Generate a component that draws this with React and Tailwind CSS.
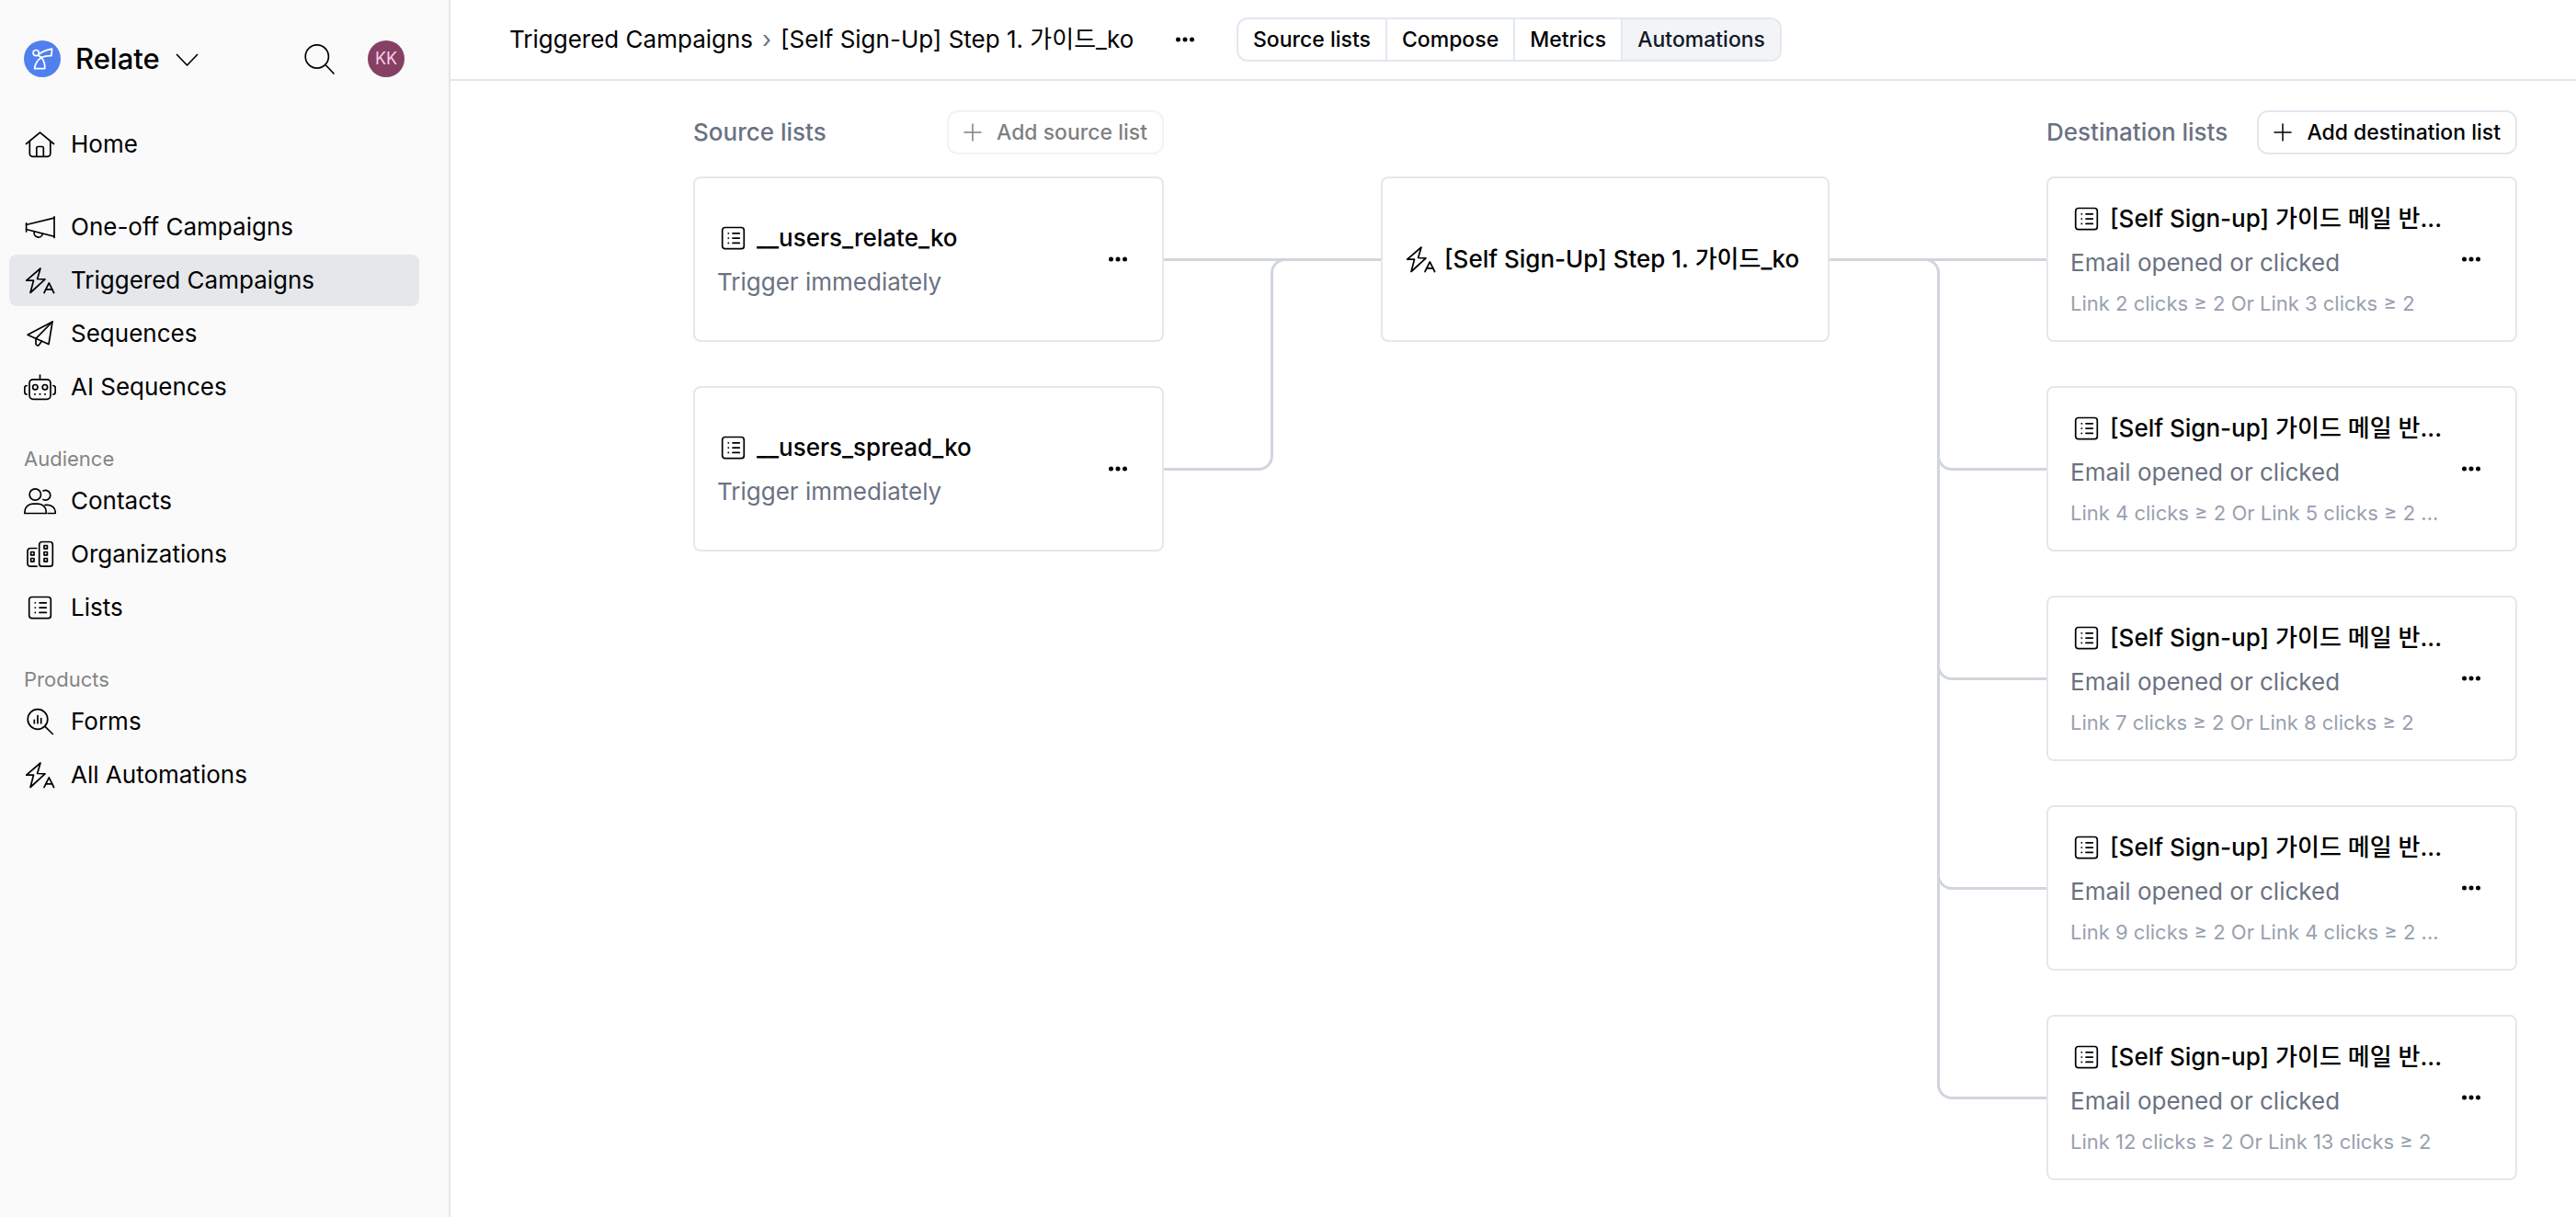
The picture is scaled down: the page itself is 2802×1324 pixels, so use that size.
const ICONS = {
  home: (
    <>
      <path d="M2.500 16.500 17.500 4.200l15 12.300" />
      <path d="M6.300 13.800V27.300a3 3 0 0 0 3 3h16.500a3 3 0 0 0 3-3V13.800" />
      <path d="M13.800 30V21a1.500 1.500 0 0 1 1.500-1.500h4.500a1.500 1.500 0 0 1 1.500 1.500V30" />
    </>
  ),
  horn: (
    <>
      <path d="M33 5.800v22.700" />
      <path d="M2.600 12.800V22" />
      <path d="M2.600 14.500 33 7.200" />
      <path d="M2.600 19.500 33 27.300" />
      <path d="M11.300 22.300a4.600 4.600 0 0 0 9 2.300" />
    </>
  ),
  trigger: (
    <>
      <path d="M18 4 2.700 17.200h7.800L7 30.500 23 15.800l-8.400-.3Z" />
      <path d="M22 30.500l5.300-10.700 5.300 10.700" />
      <path d="M23.900 26.800h6.800" />
    </>
  ),
  plane: (
    <>
      <path d="M31 4 4 18.200l23 10.300Z" />
      <path d="M31 4 13 22.300v5.500a2 2 0 0 0 3.600 1.200L19.500 25" />
    </>
  ),
  robot: (
    <>
      <path d="M17.500 4v4.800" />
      <rect x="6" y="8.800" width="23" height="21.500" rx="4" />
      <circle cx="12.300" cy="17.200" r="2.700" />
      <circle cx="22.900" cy="17.200" r="2.700" />
      <path d="M11.700 24.800h.6M17.200 24.800h.6M22.700 24.800h.6" />
      <path d="M3.200 15.500c-1.500 0-2.400 1-2.400 2.500v4.500c0 1.500.9 2.500 2.400 2.500" />
      <path d="M31.800 15.500c1.500 0 2.400 1 2.400 2.500v4.500c0 1.500-.9 2.500-2.400 2.500" />
    </>
  ),
  people: (
    <>
      <circle cx="12.300" cy="10" r="6.200" />
      <path d="M.9 30.500v-1.500c0-5 4-8.800 9-8.800h5.400c5 0 9 3.800 9 8.800v1.500Z" />
      <path d="M21 6a5.300 5.300 0 1 1 0 9.400" />
      <path d="M23 21.300h3c4.600 0 8.200 3.500 8.200 8v1.200h-8" />
    </>
  ),
  buildings: (
    <>
      <path d="M13.700 10.500H7a3 3 0 0 0-3 3v13.700a3 3 0 0 0 3 3h7" />
      <rect x="16.700" y="3.500" width="14.600" height="26.700" rx="3" />
      <path d="M7.600 14.500h3.400v3.400H7.600zM7.600 21.500h3.400v3.400H7.600zM22 7.500h3.400v3.400H22zM22 14.500h3.400v3.400H22zM22 21.500h3.400v3.400H22z" />
    </>
  ),
  list: (
    <>
      <rect x="5.700" y="5.500" width="23.600" height="23.200" rx="3" />
      <path d="M12.200 11.800h.2M12.200 17.100h.2M12.200 22.400h.2M17 11.800h7.300M17 17.100h7.300M17 22.400h7.300" />
    </>
  ),
  lens: (
    <>
      <circle cx="15" cy="14.500" r="10.800" />
      <path d="M23 22.300 31.300 30.500" />
      <path d="M11.300 15.300v3.500M15 10.500v8.300M18.700 13.500v5.300" />
    </>
  ),
  search: (
    <>
      <circle cx="14.800" cy="14.500" r="12.600" />
      <path d="M24 23.500 33 33" />
    </>
  ),
  chevron: <path d="M6.500 12.500 17.500 24 28.500 12.500" />,
};

function Icon({ name }) {
  return (
    <svg
      viewBox="0 0 35 35"
      fill="none"
      stroke="currentColor"
      strokeWidth="1.700"
      strokeLinecap="round"
      strokeLinejoin="round"
      className="size-[35px] shrink-0"
      aria-hidden="true"
    >
      {ICONS[name]}
    </svg>
  );
}

function Plus() {
  return (
    <svg viewBox="0 0 20 20" fill="none" stroke="currentColor" strokeWidth="1.500" strokeLinecap="round" className="size-5" aria-hidden="true">
      <path d="M10 1v18M1 10h18" />
    </svg>
  );
}

function Dots() {
  return (
    <button type="button" aria-label="More" className="flex size-10 shrink-0 items-center justify-center">
      <svg viewBox="0 0 22 6" className="h-1.5 w-5.5" fill="currentColor" aria-hidden="true">
        <circle cx="3.500" cy="3" r="2.500" />
        <circle cx="11" cy="3" r="2.500" />
        <circle cx="18.500" cy="3" r="2.500" />
      </svg>
    </button>
  );
}

const NAV = [
  { items: [["home", "Home"]] },
  {
    items: [
      ["horn", "One-off Campaigns"],
      ["trigger", "Triggered Campaigns", true],
      ["plane", "Sequences"],
      ["robot", "AI Sequences"],
    ],
  },
  {
    title: "Audience",
    items: [
      ["people", "Contacts"],
      ["buildings", "Organizations"],
      ["list", "Lists"],
    ],
  },
  {
    title: "Products",
    items: [
      ["lens", "Forms"],
      ["trigger", "All Automations"],
    ],
  },
];

function Sidebar() {
  return (
    <aside className="w-[490px] shrink-0 border-r-2 border-gray-200 bg-[#fafafa] pr-8 pl-2.5">
      <div className="flex h-32 items-center px-4">
        <svg viewBox="0 0 40 40" className="size-10 shrink-0" aria-hidden="true">
          <circle cx="20" cy="20" r="20" fill="#4f80ee" />
          <g fill="none" stroke="#fff" strokeWidth="1.700" strokeLinejoin="round">
            <circle cx="13.200" cy="13.600" r="3.100" />
            <path d="M16.300 15.200C20 12.300 25 10.200 30.500 9.200L30 16.700C26 16.600 22.500 17 19 18.500L15.500 16.200" />
            <path d="M19 18.500C14.500 21.500 12 26 11.600 30.700H22.800C23 26.500 22 22 19 18.500Z" />
          </g>
        </svg>
        <button type="button" className="ml-4 flex items-center gap-3 text-[31px] font-medium">
          Relate
          <Icon name="chevron" />
        </button>
        <button type="button" aria-label="Search" className="ml-auto">
          <Icon name="search" />
        </button>
        <span className="ml-[35px] flex size-10 items-center justify-center rounded-full bg-[#864064] text-lg text-pink-200">
          KK
        </span>
      </div>
      <nav className="flex flex-col gap-8.5 pt-px">
        {NAV.map((group, i) => (
          <div key={i}>
            {group.title && (
              <h2 className="pb-0.5 pl-4 text-[22px] leading-8 text-[#858585]">{group.title}</h2>
            )}
            <ul className="flex flex-col gap-0.5">
              {group.items.map(([icon, label, active]) => (
                <li key={label}>
                  <a
                    href="#"
                    aria-current={active ? "page" : undefined}
                    className={`flex h-14 items-center gap-4 rounded-lg px-4 ${active ? "bg-gray-200" : ""}`}
                  >
                    <Icon name={icon} />
                    {label}
                  </a>
                </li>
              ))}
            </ul>
          </div>
        ))}
      </nav>
    </aside>
  );
}

const TABS = ["Source lists", "Compose", "Metrics", "Automations"];

function Header() {
  return (
    <header className="flex h-22 items-center border-b-2 border-gray-200 pl-16">
      <div className="flex w-[680px] items-center gap-2.5 overflow-hidden whitespace-nowrap">
        <a href="#">Triggered Campaigns</a>
        <span className="text-gray-500">›</span>
        <span>[Self Sign-Up] Step 1. 가이드_ko</span>
      </div>
      <div className="ml-[35px]">
        <Dots />
      </div>
      <div className="ml-9 flex h-12 divide-x-2 divide-slate-200 overflow-hidden rounded-xl border-2 border-slate-200 text-[23px] font-medium">
        {TABS.map((tab) => (
          <button
            key={tab}
            type="button"
            className={`px-4 ${tab === "Automations" ? "bg-gray-100 text-gray-900" : ""}`}
          >
            {tab}
          </button>
        ))}
      </div>
    </header>
  );
}

function ColumnHead({ title, action, disabled }) {
  return (
    <div className="mb-6 flex h-12 items-center justify-between">
      <h2 className="font-medium text-gray-500">{title}</h2>
      <button
        type="button"
        disabled={disabled}
        className="flex h-12 items-center gap-4 rounded-xl border-2 border-slate-200 px-4 text-[23px] font-medium disabled:opacity-50"
      >
        <Plus />
        {action}
      </button>
    </div>
  );
}

function ListCard({ title, subtitle, detail }) {
  return (
    <article className="flex h-45 items-center rounded-lg border-2 border-gray-200 pr-7 pl-6">
      <div className="flex min-w-0 flex-1 flex-col pt-0.5">
        <h3 className="flex items-center gap-2 font-medium">
          <Icon name="list" />
          <span className="truncate">{title}</span>
        </h3>
        <p className="mt-2 text-gray-500">{subtitle}</p>
        {detail && <p className="mt-1.5 truncate text-[22px] leading-9 text-gray-400">{detail}</p>}
      </div>
      <Dots />
    </article>
  );
}

const SOURCES = ["__users_relate_ko", "__users_spread_ko"];

const DESTINATIONS = [
  "Link 2 clicks ≥ 2 Or Link 3 clicks ≥ 2",
  "Link 4 clicks ≥ 2 Or Link 5 clicks ≥ 2 ...",
  "Link 7 clicks ≥ 2 Or Link 8 clicks ≥ 2",
  "Link 9 clicks ≥ 2 Or Link 4 clicks ≥ 2 ...",
  "Link 12 clicks ≥ 2 Or Link 13 clicks ≥ 2",
];

function Straight() {
  return <div className="mt-[161px] h-[3px] bg-gray-300" />;
}

function JoinLines() {
  return (
    <div className="relative">
      <Straight />
      <div className="absolute top-[161px] right-0 left-[calc(50%-2px)] h-30 rounded-tl-2xl border-t-[3px] border-l-[3px] border-gray-300" />
      <div className="absolute top-[269px] right-[calc(50%-1px)] left-0 h-[123px] rounded-br-2xl border-r-[3px] border-b-[3px] border-gray-300" />
    </div>
  );
}

function FanLines() {
  return (
    <div className="relative">
      <Straight />
      <div className="absolute top-[161px] right-[calc(50%-2px)] left-0 h-[900px] rounded-tr-2xl border-t-[3px] border-r-[3px] border-gray-300" />
      <div className="absolute top-[164px] right-0 left-[calc(50%-1px)] flex flex-col">
        {DESTINATIONS.slice(1).map((key) => (
          <div key={key} className="flex h-57 items-end">
            <div className="h-8 flex-1 rounded-bl-2xl border-b-[3px] border-l-[3px] border-gray-300" />
          </div>
        ))}
      </div>
    </div>
  );
}

function Board() {
  return (
    <section className="grid grid-cols-[512px_minmax(80px,1fr)_488px_minmax(80px,1fr)_512px] pt-8 pr-16 pb-10 pl-66">
      <div>
        <ColumnHead title="Source lists" action="Add source list" disabled />
        <div className="flex flex-col gap-12">
          {SOURCES.map((name) => (
            <ListCard key={name} title={name} subtitle="Trigger immediately" />
          ))}
        </div>
      </div>
      <JoinLines />
      <div className="pt-18">
        <article className="flex h-45 items-center gap-2 rounded-lg border-2 border-gray-200 px-6 font-medium whitespace-nowrap">
          <Icon name="trigger" />
          <h3>[Self Sign-Up] Step 1. 가이드_ko</h3>
        </article>
      </div>
      <FanLines />
      <div>
        <ColumnHead title="Destination lists" action="Add destination list" />
        <div className="flex flex-col gap-12">
          {DESTINATIONS.map((detail) => (
            <ListCard
              key={detail}
              title="[Self Sign-up] 가이드 메일 반..."
              subtitle="Email opened or clicked"
              detail={detail}
            />
          ))}
        </div>
      </div>
    </section>
  );
}

export default function App() {
  return (
    <div className="flex min-h-screen bg-white font-['Inter','Noto_Sans_CJK_KR',sans-serif] text-[26px] leading-10 text-black">
      <Sidebar />
      <main className="min-w-0 flex-1">
        <Header />
        <Board />
      </main>
    </div>
  );
}
